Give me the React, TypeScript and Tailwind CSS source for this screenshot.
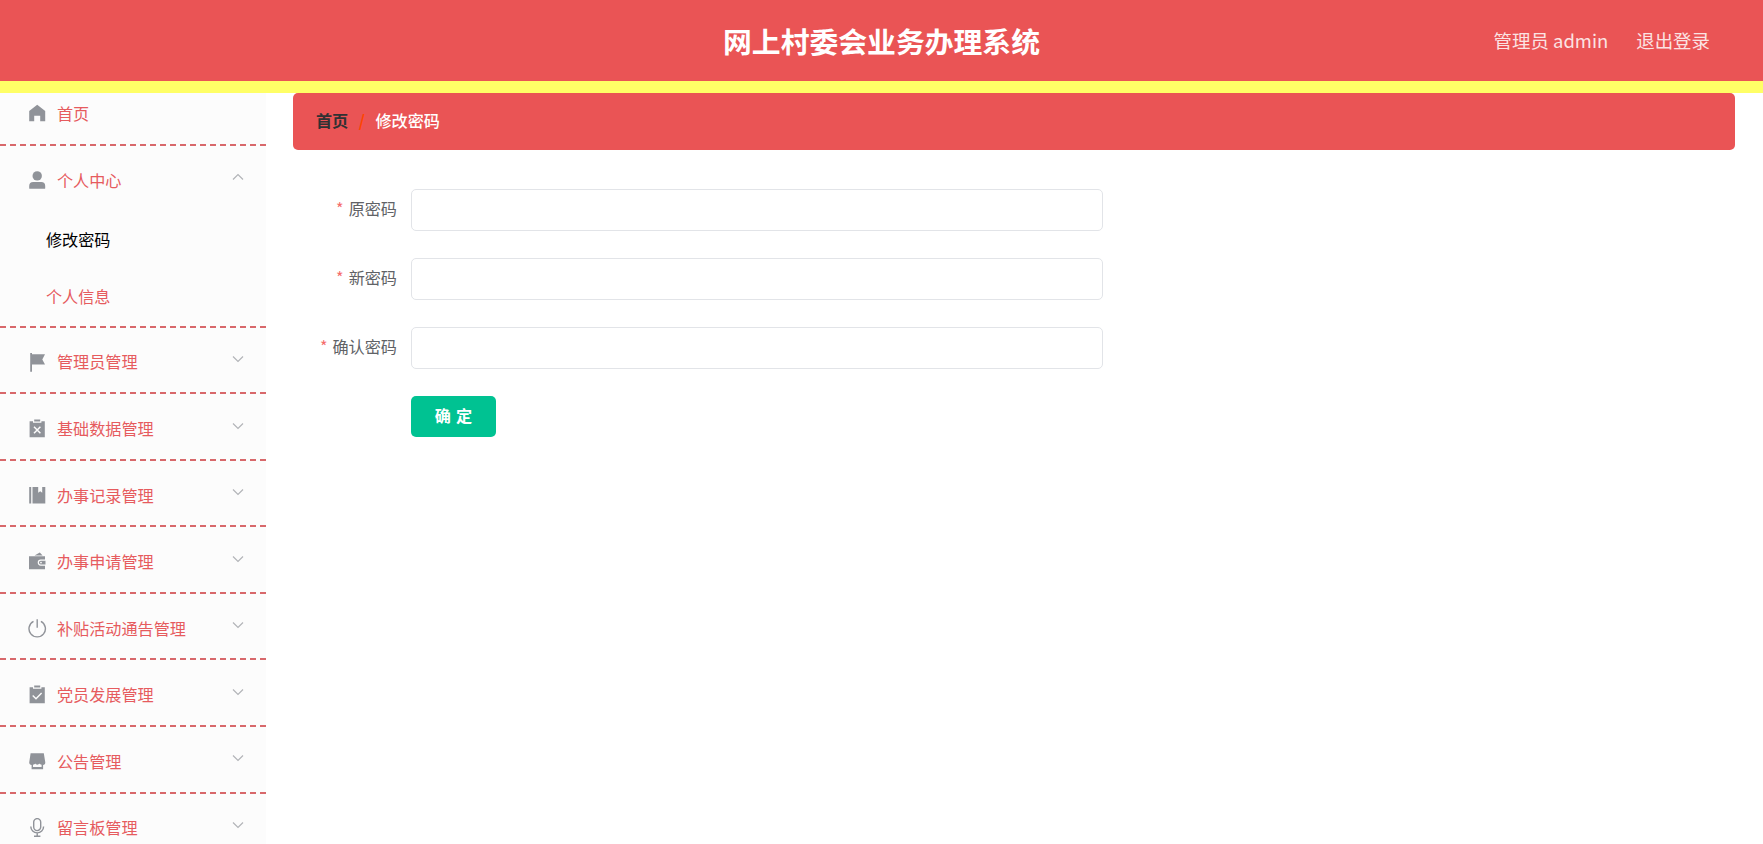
import type { ReactNode } from "react";

interface MenuItem {
  title: string;
  icon: ReactNode;
  children?: string[];
}

const menus: MenuItem[] = [
  {
    title: "个人中心",
    icon: (
      <>
        <circle cx="9.2" cy="4.9" r="4.7" />
        <path d="M1.2 17.2v-2.2a4 4 0 0 1 4-4h8a4 4 0 0 1 4 4v2.2a.6.6 0 0 1-.6.6H1.8a.6.6 0 0 1-.6-.6z" />
      </>
    ),
    children: ["修改密码", "个人信息"],
  },
  {
    title: "管理员管理",
    icon: <path d="M2.2 0h1.8v1.2H17l-2.700 5.200 2.700 5.200H4v7.200H2.200z" />,
  },
  {
    title: "基础数据管理",
    icon: (
      <>
        <path d="M1.600 2.200h3.400v1.600h8.400V2.200h3.400v16H1.600zM6.200 0.400h6v2.200h-6z" />
        <path d="M6 7.800l6.400 6.400M12.400 7.800L6 14.200" stroke="#fcfcfc" strokeWidth="1.500" />
      </>
    ),
  },
  {
    title: "办事记录管理",
    icon: <path d="M1.200 1h2v16.400h-2zM4.500 1h5.700v5.800l2-1.600 2 1.600V1h3.100v16.400H4.500z" />,
  },
  {
    title: "办事申请管理",
    icon: (
      <path
        fillRule="evenodd"
        d="M6.500 3.400L11.800 .5l2.800 2.900zM1 4.200h16v3.300h-4.200a3.100 3.100 0 0 0 0 6.200H17v3.500H1zM12.800 8.700h4.700v3.800h-4.700a1.900 1.900 0 0 1 0-3.800zm.2 1a.9.9 0 1 0 0 1.800.9.9 0 0 0 0-1.800z"
      />
    ),
  },
  {
    title: "补贴活动通告管理",
    icon: (
      <path
        d="M9.200 .3v8.500M5.500 2.400a8.200 8.200 0 1 0 7.400 0"
        fill="none"
        stroke="currentColor"
        strokeWidth="1.400"
      />
    ),
  },
  {
    title: "党员发展管理",
    icon: (
      <>
        <path d="M1.600 2.200h3.400v1.600h8.400V2.200h3.400v16H1.600zM6.200 0.400h6v2.200h-6z" />
        <path d="M4.700 10.500l3.300 3.200 5.600-5.600" fill="none" stroke="#fcfcfc" strokeWidth="1.400" />
      </>
    ),
  },
  {
    title: "公告管理",
    icon: (
      <>
        <path d="M2.600 1.200h13.200l1.500 9.300c0 1.300-.8 2.300-2.200 2.500v4.200H3.600v-4.200c-1.400-.2-2.400-1.200-2.400-2.500z" />
        <path d="M5 15v-2.300c1 0 1.900-.5 2.200-1.100.4.700 1.200 1.100 2.100 1.100s1.700-.4 2.100-1.100c.4.600 1.200 1.100 2.200 1.100V15z" fill="#fcfcfc" />
      </>
    ),
  },
  {
    title: "留言板管理",
    icon: (
      <path
        d="M9.200 .6a3.500 3.500 0 0 1 3.500 3.500v5a3.500 3.500 0 0 1-7 0v-5A3.500 3.500 0 0 1 9.200 .6zM2.800 8.500a6.400 6.400 0 0 0 12.800 0M9.200 15v3M6 18.200h6.400"
        fill="none"
        stroke="currentColor"
        strokeWidth="1.400"
      />
    ),
  },
];

const fields = ["原密码", "新密码", "确认密码"];

function Icon({ children }: { children: ReactNode }) {
  return (
    <svg width="19" height="19" viewBox="0 0 19 19" fill="currentColor" className="mt-px shrink-0 text-[#909399]">
      {children}
    </svg>
  );
}

function Arrow({ open }: { open: boolean }) {
  return (
    <svg width="12" height="8" viewBox="0 0 12 8" fill="none" stroke="#b2b4b8" strokeWidth="1.200" className="mb-[5px] ml-auto">
      <path d={open ? "M1 6.500L6 1.500l5 5" : "M1 1.500l5 5 5-5"} />
    </svg>
  );
}

function Sidebar() {
  return (
    <ul className="h-[751px] w-[266px] shrink-0 overflow-hidden bg-[#fcfcfc] text-[16.140px] text-[#e65b5e]">
      <li className="flex h-[53px] items-start border-b-2 border-dashed border-[#d8686b] pt-[8px] pl-[28px]">
        <div className="flex h-6 items-center">
          <Icon>
            <path d="M9.200 .8l8 6.300v10.100h-5v-5.400h-6v5.400h-5V7.100z" />
          </Icon>
          <span className="ml-[10px]">首页</span>
        </div>
      </li>
      {menus.map((item) => (
        <li key={item.title} className="border-b-2 border-dashed border-[#d8686b]">
          <div className="flex h-[64.560px] items-center pt-[3px] pr-[22px] pl-[28px]">
            <Icon>{item.icon}</Icon>
            <span className="ml-[10px]">{item.title}</span>
            <Arrow open={!!item.children} />
          </div>
          {item.children?.map((child, index) => (
            <p key={child} className={index === 0 ? "h-[57.600px] pl-[46px] leading-[57.500px] text-black" : "h-[57.600px] pl-[46px] leading-[57px]"}>
              {child}
            </p>
          ))}
        </li>
      ))}
    </ul>
  );
}

function App() {
  return (
    <div className="h-[844px] overflow-hidden bg-white font-['Noto_Sans_CJK_SC',sans-serif]">
      <header className="grid h-[93px] grid-cols-3 items-center border-b-[12px] border-[#ffff66] bg-[#ea5455]">
        <h1 className="col-start-2 text-center text-[28.820px] font-bold text-white">网上村委会业务办理系统</h1>
        <div className="flex justify-end gap-7 pr-[53px] text-[18.450px] text-[#fbe3e3]">
          <span>管理员 admin</span>
          <span>退出登录</span>
        </div>
      </header>
      <div className="flex">
        <Sidebar />
        <main className="flex-1 pr-[28px] pl-[27px]">
          <nav className="flex h-[57px] items-center rounded-[5px] bg-[#ea5455] pb-[3px] pl-[23px] text-[16.140px]">
            <span className="font-bold text-[#303133]">首页</span>
            <span className="mx-[10.500px] font-bold text-[#ff4400]">/</span>
            <span className="font-medium text-white">修改密码</span>
          </nav>
          <form className="mt-[39px] text-[16.140px]">
            {fields.map((field) => (
              <div key={field} className="mb-[27px] flex h-[41.900px]">
                <label className="w-[104px] text-right leading-[38px] text-[#606266]">
                  <span className="mr-[5px] text-[#f56c6c]">*</span>
                  {field}
                </label>
                <input type="password" className="ml-[14px] w-[692px] rounded-[5px] border border-[#e2e4e8] bg-white" />
              </div>
            ))}
            <button type="button" className="ml-[118px] h-[41px] w-[85px] rounded-[5px] bg-[#00c292] pb-[3px] text-[16.140px] font-bold text-white [word-spacing:1.500px]">
              确 定
            </button>
          </form>
        </main>
      </div>
    </div>
  );
}

export default App;
